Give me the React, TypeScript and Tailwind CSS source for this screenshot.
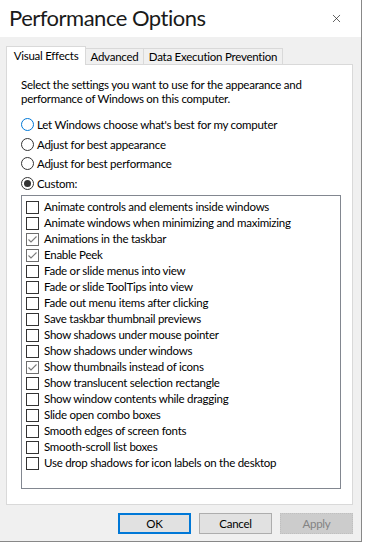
import { X } from 'lucide-react'

const effects: [string, boolean][] = [
  ['Animate controls and elements inside windows', false],
  ['Animate windows when minimizing and maximizing', false],
  ['Animations in the taskbar', true],
  ['Enable Peek', true],
  ['Fade or slide menus into view', false],
  ['Fade or slide ToolTips into view', false],
  ['Fade out menu items after clicking', false],
  ['Save taskbar thumbnail previews', false],
  ['Show shadows under mouse pointer', false],
  ['Show shadows under windows', false],
  ['Show thumbnails instead of icons', true],
  ['Show translucent selection rectangle', false],
  ['Show window contents while dragging', false],
  ['Slide open combo boxes', false],
  ['Smooth edges of screen fonts', false],
  ['Smooth-scroll list boxes', false],
  ['Use drop shadows for icon labels on the desktop', false],
]

const radios = [
  { label: "Let Windows choose what's best for my computer", checked: false, hover: true },
  { label: 'Adjust for best appearance', checked: false, hover: false },
  { label: 'Adjust for best performance', checked: false, hover: false },
  { label: 'Custom:', checked: true, hover: false },
]

function Radio({ checked, hover }: { checked: boolean; hover: boolean }) {
  return (
    <span
      className={`flex items-center justify-center w-[13px] h-[13px] rounded-full border bg-white shrink-0 ${
        hover ? 'border-[#0078d7]' : 'border-[#333333]'
      }`}
    >
      {checked && <span className="w-[7px] h-[7px] rounded-full bg-[#333333]" />}
    </span>
  )
}

function Checkbox({ checked }: { checked: boolean }) {
  return (
    <span
      className={`flex items-center justify-center w-[13px] h-[13px] border bg-white shrink-0 ${
        checked ? 'border-[#6e6e6e]' : 'border-[#333333]'
      }`}
    >
      {checked && (
        <svg width="11" height="11" viewBox="0 0 11 11">
          <polyline points="1.5,5.5 4,8 9.5,2.5" fill="none" stroke="#7a7a7a" strokeWidth="1.1" />
        </svg>
      )}
    </span>
  )
}

export default function App() {
  return (
    <div
      className="w-[365px] h-[544px] bg-white text-[11.5px] tracking-[-0.25px] text-black"
      style={{ fontFamily: 'Lato, "Segoe UI", sans-serif' }}
    >
      <div className="w-[362px] h-[542px] flex flex-col border-r border-b border-[#888888]">
        {/* Title bar */}
        <div className="h-[37px] bg-white flex items-center justify-between pl-[9px] pr-[18px] shrink-0">
          <h1 className="text-[22px] leading-none font-normal tracking-[-0.5px] text-[#1a1a1a] -mt-[1px]">
            Performance Options
          </h1>
          <X className="w-[13px] h-[13px] text-[#222]" strokeWidth={1.3} />
        </div>

        {/* Body */}
        <div className="flex-1 bg-[#f0f0f0] flex flex-col pt-[8px] pl-[6px] pr-[8px]">
          <div className="flex items-end h-[19px]">
            <div className="h-[19px] w-[80px] bg-white border border-b-0 border-[#d9d9d9] flex items-center justify-center relative z-10 -mb-px">
              Visual Effects
            </div>
            <div className="h-[16px] w-[58px] border border-b-0 border-l-0 border-[#d9d9d9] flex items-center justify-center">
              Advanced
            </div>
            <div className="h-[16px] w-[139px] border border-b-0 border-l-0 border-[#d9d9d9] flex items-center justify-center">
              Data Execution Prevention
            </div>
          </div>

          <div className="h-[441px] bg-white border border-[#d9d9d9] flex flex-col pl-[14px] pr-[11px] pt-[13px]">
            <p className="leading-[14px] whitespace-nowrap">
              Select the settings you want to use for the appearance and
              <br />
              performance of Windows on this computer.
            </p>

            <div className="mt-[9px] flex flex-col">
              {radios.map((r) => (
                <label key={r.label} className="h-[19.5px] flex items-center gap-[3px]">
                  <Radio checked={r.checked} hover={r.hover} />
                  <span>{r.label}</span>
                </label>
              ))}
            </div>

            <div className="mt-[2px] h-[294px] border border-[#828790] bg-white pt-[3px] pl-[4px]">
              {effects.map(([label, checked]) => (
                <div key={label} className="h-[16px] flex items-center gap-[5px]">
                  <Checkbox checked={checked} />
                  <span>{label}</span>
                </div>
              ))}
            </div>
          </div>

          {/* Buttons */}
          <div className="mt-[8px] flex justify-end gap-[8px]">
            <button className="w-[73px] h-[21px] bg-[#e1e1e1] border-2 border-[#0078d7] leading-none">
              OK
            </button>
            <button className="w-[73px] h-[21px] bg-[#e1e1e1] border border-[#adadad] leading-none">
              Cancel
            </button>
            <button className="w-[73px] h-[21px] bg-[#cccccc] border border-dotted border-[#bfbfbf] text-[#838383] leading-none">
              Apply
            </button>
          </div>
        </div>
      </div>
    </div>
  )
}
